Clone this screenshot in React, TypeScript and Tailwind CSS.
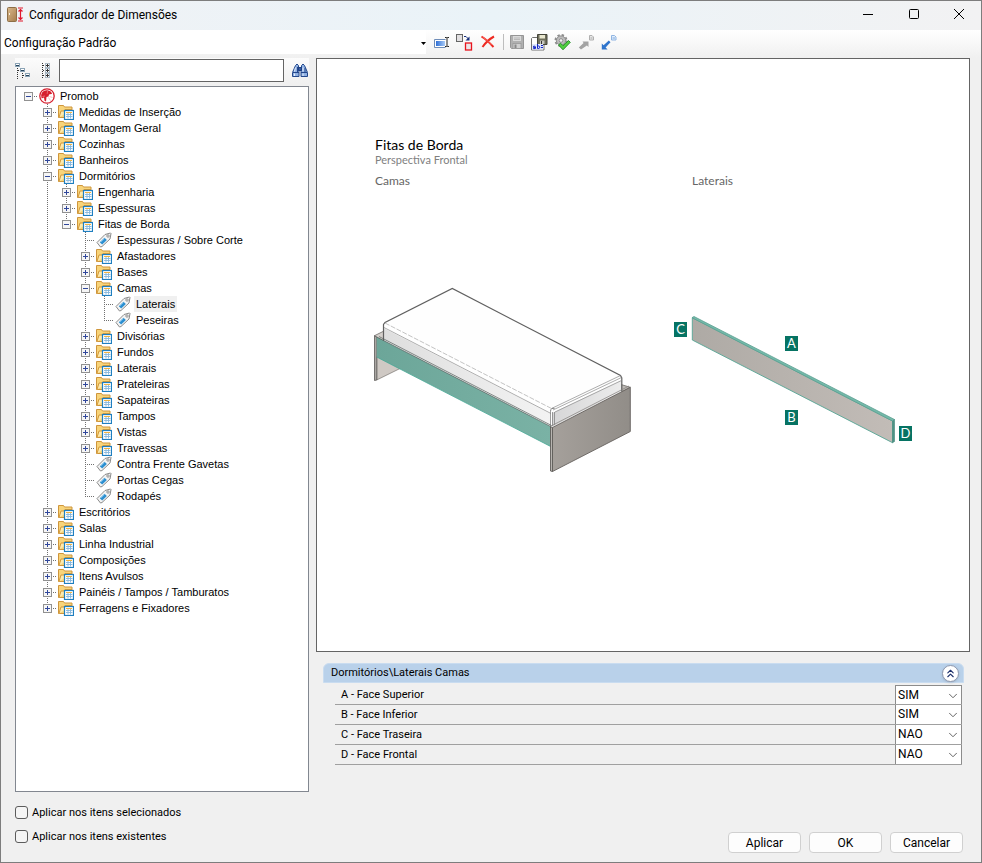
import { useState } from "react";
import { ChevronDown, ChevronsUp } from "lucide-react";

type TreeItem = {
  label: string;
  kind?: "root" | "folder" | "tag";
  open?: boolean;
  children?: TreeItem[];
};

const folder = (label: string): TreeItem => ({ label, kind: "folder" });
const tag = (label: string): TreeItem => ({ label, kind: "tag" });

const tree: TreeItem = {
  label: "Promob",
  kind: "root",
  open: true,
  children: [
    folder("Medidas de Inserção"),
    folder("Montagem Geral"),
    folder("Cozinhas"),
    folder("Banheiros"),
    {
      label: "Dormitórios",
      kind: "folder",
      open: true,
      children: [
        folder("Engenharia"),
        folder("Espessuras"),
        {
          label: "Fitas de Borda",
          kind: "folder",
          open: true,
          children: [
            tag("Espessuras / Sobre Corte"),
            folder("Afastadores"),
            folder("Bases"),
            {
              label: "Camas",
              kind: "folder",
              open: true,
              children: [tag("Laterais"), tag("Peseiras")],
            },
            folder("Divisórias"),
            folder("Fundos"),
            folder("Laterais"),
            folder("Prateleiras"),
            folder("Sapateiras"),
            folder("Tampos"),
            folder("Vistas"),
            folder("Travessas"),
            tag("Contra Frente Gavetas"),
            tag("Portas Cegas"),
            tag("Rodapés"),
          ],
        },
      ],
    },
    folder("Escritórios"),
    folder("Salas"),
    folder("Linha Industrial"),
    folder("Composições"),
    folder("Itens Avulsos"),
    folder("Painéis / Tampos / Tamburatos"),
    folder("Ferragens e Fixadores"),
  ],
};

const faces = [
  { id: "face-a", label: "A - Face Superior", value: "SIM" },
  { id: "face-b", label: "B - Face Inferior", value: "SIM" },
  { id: "face-c", label: "C - Face Traseira", value: "NAO" },
  { id: "face-d", label: "D - Face Frontal", value: "NAO" },
];

/* Icons */

function AppIcon() {
  return (
    <svg width="18" height="16" viewBox="0 0 18 16" aria-hidden="true">
      <defs>
        <linearGradient id="door" x1="0" y1="0" x2="1" y2="1">
          <stop offset="0" stopColor="#d9b98c" />
          <stop offset="1" stopColor="#a67c4a" />
        </linearGradient>
      </defs>
      <rect x=".5" y=".5" width="9" height="14" rx="1" fill="url(#door)" stroke="#8d6e46" />
      <rect x="2" y="6" width="1" height="2" fill="#f7ecd8" />
      <path d="M11 1h5M11 14h5" stroke="#e0182d" strokeWidth="1.200" />
      <path d="M13.500 2v11M11.500 4.500l2-2 2 2M11.500 10.500l2 2 2-2" stroke="#e0182d" strokeWidth="1.200" fill="none" />
    </svg>
  );
}

function CollapseIcon() {
  return (
    <svg width="16" height="16" viewBox="0 0 16 16" shapeRendering="crispEdges" aria-hidden="true">
      <g fill="#fff" stroke="#8ba3b5">
        <rect x="0.500" y="0.500" width="4" height="3" />
        <rect x="5.500" y="5.500" width="4" height="3" />
        <rect x="10.500" y="10.500" width="4" height="3" />
      </g>
      <path d="M1 2.500h3M6 7.500h3M11 12.500h3" stroke="#27465e" />
      <path d="M2.500 5v11M7.500 10v6M3 7.500h2M8 12.500h2" stroke="#333" strokeDasharray="1 1" />
    </svg>
  );
}

function ExpandIcon() {
  return (
    <svg width="16" height="16" viewBox="0 0 16 16" shapeRendering="crispEdges" aria-hidden="true">
      <path d="M5.500 0v16M6 2.500h3M6 7.500h3M6 12.500h3" stroke="#333" strokeDasharray="1 1" />
      <g fill="#fff" stroke="#a9b7c2">
        <rect x="8.500" y="0.500" width="4" height="4" />
        <rect x="8.500" y="5.500" width="4" height="4" />
        <rect x="8.500" y="10.500" width="4" height="4" />
      </g>
      <path d="M9 2.500h3M9 7.500h3M9 12.500h3M10.500 1v3M10.500 6v3M10.500 11v3" stroke="#333" />
    </svg>
  );
}

function BinocularsIcon() {
  return (
    <svg width="16" height="16" viewBox="0 0 16 16" aria-hidden="true">
      <path d="M3.500 2.500L5 1l1.500 1.500V6l.5 2.500v5H.5v-4z" fill="#8fb0e2" stroke="#24488c" />
      <path d="M12.500 2.500L11 1 9.500 2.500V6L9 8.500v5h6.500v-4z" fill="#8fb0e2" stroke="#24488c" />
      <path d="M6.500 4.500h3v3h-3z" fill="#34599e" stroke="#1c3f83" />
      <path d="M1 9.500h6M9 9.500h6M5.500 4v5M13 5v4" stroke="#23468b" />
      <path d="M3.500 4.500l-1 4M11 4.500v4M2.500 10.500v2.500M11 10.500v2.500" stroke="#e6effc" />
    </svg>
  );
}

function PromobIcon() {
  return (
    <svg width="16" height="16" viewBox="0 0 16 16" aria-hidden="true">
      <circle cx="8" cy="8" r="7.200" fill="#fff" stroke="#d6202f" strokeWidth="1.300" />
      <path d="M8.500 2.200A5.800 5.800 0 0 0 2.600 10.500l2.400-1 .5 3.200 1.500.8.500-4.500 2-.5.500-2 3.200-.7a5.800 5.800 0 0 0-4.700-3.600z" fill="#d6202f" />
      <path d="M8.500 2.800l-.3 3M3.500 8.500l2.500-.5" stroke="#f2a4a9" strokeWidth=".6" />
      <path d="M9.500 9.500l2 3.200M10.500 8.500l3 1" stroke="#f0b4b8" strokeWidth=".8" />
    </svg>
  );
}

function FolderIcon() {
  return (
    <svg width="16" height="16" viewBox="0 0 16 16" aria-hidden="true">
      <path d="M.5 13.500v-12h5l1 1.500h7.500v10.500z" fill="#f8d47a" stroke="#cf963c" />
      <path d="M1 13.500l2-6.500h3l1-1.500h7" fill="#fdeaae" stroke="#d39a3c" />
      <rect x="6.500" y="6.500" width="9" height="9" fill="#fff" stroke="#1f7fc0" strokeWidth="1.200" />
      <path d="M8 8.500h6" stroke="#f0b440" />
      <path d="M10 9v5.500M12.500 9v5.500M8 10.500h6.500M8 12.500h6.500" stroke="#86b7dd" strokeWidth=".9" />
    </svg>
  );
}

function TagIcon() {
  return (
    <svg width="16" height="16" viewBox="0 0 16 16" aria-hidden="true">
      <path d="M1 10.500L9 2.500l5.500-1.500.5.500-1 5.500L6 14.500l-1.500.500z" fill="#f4f4f4" stroke="#8a8a8a" />
      <circle cx="12" cy="4" r="1.200" fill="#fff" stroke="#777" strokeWidth=".8" />
      <path d="M3.800 10.300l4.700-4.600 2.400 2.200-4.700 4.700z" fill="#2c8fd0" />
      <path d="M5 10l3.500-3.500" stroke="#7cc2ee" strokeWidth=".8" />
    </svg>
  );
}

function RenameIcon() {
  return (
    <svg width="16" height="16" viewBox="0 0 16 16" aria-hidden="true">
      <defs>
        <linearGradient id="field">
          <stop offset="0" stopColor="#2f6fd6" />
          <stop offset="1" stopColor="#a9cbf7" />
        </linearGradient>
      </defs>
      <path d="M11.500 5.500H.5v8h11" fill="#fff" stroke="#6f8db8" />
      <rect x="2" y="7" width="9" height="5" fill="url(#field)" />
      <path d="M11 3.500h1.500l.5.500.5-.5h1.500M13 4v8M11 12.500h1.500l.5-.5.500.5h1.500" stroke="#222" fill="none" />
    </svg>
  );
}

function DuplicateIcon() {
  return (
    <svg width="17" height="17" viewBox="0 0 17 17" aria-hidden="true">
      <rect x=".5" y=".5" width="6" height="7" fill="#e2e0e2" stroke="#666" />
      <path d="M8 2.500h2l2.500 2.500" stroke="#17307c" fill="none" />
      <path d="M13.500 2.500v4h-4z" fill="#17307c" />
      <rect x="9.500" y="9" width="6" height="7" fill="#ece6e8" stroke="#e8131c" strokeWidth="1.300" />
    </svg>
  );
}

function DeleteIcon() {
  return (
    <svg width="16" height="16" viewBox="0 0 16 16" aria-hidden="true">
      <path d="M1.500 2.500q5 3 12 10.500M14 2.500Q7.500 6 2.500 13" stroke="#ee2a22" strokeWidth="2" fill="none" />
      <path d="M2.500 3q5 3 9 8" stroke="#ff8a80" strokeWidth=".6" fill="none" />
    </svg>
  );
}

function SaveIcon() {
  return (
    <svg width="16" height="16" viewBox="0 0 16 16" aria-hidden="true">
      <path d="M1.500 1.500h13v13h-12l-1-1z" fill="#b0b0b0" stroke="#959595" />
      <rect x="4" y="2" width="8" height="5" fill="#dadada" />
      <path d="M5 4h6M5 5.500h6" stroke="#b0b0b0" strokeWidth=".8" />
      <rect x="4" y="9.500" width="8" height="5" fill="#cfcfcf" stroke="#989898" strokeWidth=".8" />
      <rect x="5.500" y="10.500" width="2" height="3.500" fill="#888" />
    </svg>
  );
}

function SaveAsIcon() {
  return (
    <svg width="17" height="17" viewBox="0 0 17 17" aria-hidden="true">
      <path d="M.5 4.500l1-1h11.500v12.500H.5z" fill="#fff" stroke="#707070" />
      <path d="M6.500.5h9.500v10H6.500z" fill="#6f6f5c" stroke="#45453a" />
      <rect x="8.500" y="1" width="5.500" height="3.500" fill="#e9e7cf" />
      <rect x="9" y="6.500" width="4.500" height="3.500" fill="#c8c8c0" />
      <path d="M10.500 7v3" stroke="#333" />
      <rect x="1" y="10" width="11" height="5.500" fill="#dfe7fb" />
      <path d="M2 12.500q2.500-1 2.500.5v1.500q-2.500.5-2.500-.5t2.500-.5M6.500 10v4.500h1.300q1-.2 1-1.300T7.800 12H6.500M10 11.500h2M10 13.500h2" stroke="#1626c8" fill="none" />
    </svg>
  );
}

function ApplyIcon() {
  return (
    <svg width="17" height="17" viewBox="0 0 17 17" aria-hidden="true">
      <circle cx="7" cy="6.500" r="5.600" fill="none" stroke="#8d8d8d" strokeWidth="1.800" strokeDasharray="2.400 2" />
      <circle cx="7" cy="6.500" r="4.600" fill="#bdbdbd" stroke="#8a8a8a" />
      <circle cx="7" cy="6.500" r="1.800" fill="#f2f2f2" stroke="#808080" strokeWidth=".8" />
      <path d="M4.500 11l2-1.800 2.500 2.500 5.500-5.200 1.800 1.800L9 15.800z" fill="#51cf3f" stroke="#1d8a20" strokeWidth=".9" />
    </svg>
  );
}

function ExportIcon() {
  return (
    <svg width="16" height="16" viewBox="0 0 16 16" aria-hidden="true">
      <path d="M.8 13.500l4.800-4.500L4.500 7.500h6v5.500L8.900 11.500 3 15.500z" fill="#a3a3a3" />
      <path d="M11.500 1.500h2.500l1.500 1.500v3h-4z" fill="#e8e8e8" stroke="#b0b0b0" />
      <path d="M12.500 4h2" stroke="#aaa" />
    </svg>
  );
}

function ImportIcon() {
  return (
    <svg width="16" height="16" viewBox="0 0 16 16" aria-hidden="true">
      <path d="M.8 15.500V9.500l1.800 1.800 5.200-4.800 1.700 1.700-4.900 5.200 2 2.100z" fill="#2f74cc" />
      <path d="M10.500 1.500h3l1.500 1.500v3h-4.500z" fill="#e3effc" stroke="#8fb4e2" />
      <path d="M11.500 4h2.500" stroke="#7fa9de" />
    </svg>
  );
}

/* Tree */

function Guide({ dashed }: { dashed: boolean }) {
  return (
    <svg width="19" height="16" viewBox="0 0 19 16" shapeRendering="crispEdges" className="shrink-0" aria-hidden="true">
      {dashed && <path d="M9.500 0v16" stroke="#707070" strokeDasharray="1 1" />}
    </svg>
  );
}

function Branch({ item, open, root, last }: { item: TreeItem; open: boolean; root: boolean; last: boolean }) {
  return (
    <svg width="19" height="16" viewBox="0 0 19 16" shapeRendering="crispEdges" aria-hidden="true">
      {!root && <path d={last ? "M9.500 0v9" : "M9.500 0v16"} stroke="#707070" strokeDasharray="1 1" />}
      <path d="M9 8.500h10" stroke="#707070" strokeDasharray="1 1" />
      {item.kind !== "tag" && (
        <>
          <rect x="5.500" y="4.500" width="8" height="8" fill="#f6f6f6" stroke="#919191" />
          <path d={open ? "M7 8.500h5" : "M7 8.500h5M9.500 6v5"} stroke="#30479b" />
        </>
      )}
    </svg>
  );
}

type NodeProps = {
  item: TreeItem;
  guides: boolean[];
  last: boolean;
  path: string;
  selected: string;
  onSelect: (path: string) => void;
};

function TreeNode({ item, guides, last, path, selected, onSelect }: NodeProps) {
  const [open, setOpen] = useState(!!item.open);
  const root = item.kind === "root";
  const children = item.children ?? [];

  return (
    <li role="treeitem" aria-expanded={item.kind === "tag" ? undefined : open} aria-selected={selected === path}>
      <div className="flex h-4 items-center">
        {guides.map((dashed, i) => (
          <Guide key={i} dashed={dashed} />
        ))}
        {item.kind === "tag" ? (
          <Branch item={item} open={open} root={root} last={last} />
        ) : (
          <button type="button" aria-label={open ? "Recolher" : "Expandir"} onClick={() => setOpen(!open)}>
            <Branch item={item} open={open} root={root} last={last} />
          </button>
        )}
        <button type="button" onClick={() => onSelect(path)} className="flex h-4 items-center gap-[3px] pl-px whitespace-nowrap">
          {root && <PromobIcon />}
          {item.kind === "folder" && <FolderIcon />}
          {item.kind === "tag" && <TagIcon />}
          <span className={selected === path ? "bg-[#f0f0f0] px-0.5 leading-4" : "px-0.5 leading-4"}>{item.label}</span>
        </button>
      </div>
      {open && children.length > 0 && (
        <ul role="group">
          {children.map((child, i) => (
            <TreeNode
              key={child.label}
              item={child}
              guides={[...guides, !last]}
              last={i === children.length - 1}
              path={`${path}/${child.label}`}
              selected={selected}
              onSelect={onSelect}
            />
          ))}
        </ul>
      )}
    </li>
  );
}

/* Preview drawings */

function BedDrawing() {
  return (
    <svg width="261" height="192" viewBox="375 284 261 192" className="overflow-visible" role="img" aria-label="Camas">
      <defs>
        <linearGradient id="foot">
          <stop offset="0" stopColor="#a5a09b" />
          <stop offset="1" stopColor="#918d88" />
        </linearGradient>
        <linearGradient id="rail">
          <stop offset="0" stopColor="#6ca699" />
          <stop offset="1" stopColor="#7ab2a5" />
        </linearGradient>
        <linearGradient id="side">
          <stop offset="0" stopColor="#dedede" />
          <stop offset="1" stopColor="#f3f3f3" />
        </linearGradient>
        <linearGradient id="end">
          <stop offset="0" stopColor="#d6d6d7" />
          <stop offset="1" stopColor="#ececec" />
        </linearGradient>
      </defs>
      <path d="M374.500 335.700L384 331v10l-7.300-3.500z" fill="#d5d0cc" stroke="#6b6865" strokeWidth=".8" />
      <path d="M376.700 356L400 368.500 376.700 380z" fill="#cfc9c4" stroke="#77736f" strokeWidth=".7" />
      <path d="M374.500 335.700l2.300 1.300v43l-2.300.5z" fill="#aaa6a2" stroke="#5b5856" strokeWidth=".8" />
      <path d="M621 384.500l9.300 2.800-9 5z" fill="#bdb9b5" stroke="#6b6865" strokeWidth=".8" />
      <path d="M383.500 328v12.500L551 427v-13z" fill="url(#side)" />
      <path d="M552 411l69.500-33v13.500L552 427z" fill="url(#end)" />
      <path d="M452.300 288.500L385 322.500l-1.500 5L551 413.500l70.500-33.500v-2L620.500 375.500z" fill="#fefefe" />
      <path d="M383.500 341v-16.500l1.500-2 67.300-34 168.200 87 1.300 2.500v13" fill="none" stroke="#606060" strokeWidth="1.200" />
      <path d="M385 323L551.500 408.500" fill="none" stroke="#9a9a9a" strokeWidth=".6" strokeDasharray="5 1.500" />
      <path d="M384 327.500L551 413.500" fill="none" stroke="#8a8a8a" strokeWidth=".7" />
      <path d="M551.500 408.500l69-33M553 410l68.500-32.500M555 412l66.500-31.500" fill="none" stroke="#8a8a8a" strokeWidth=".7" />
      <path d="M550.500 411v15M552.500 412v14M554.500 412V425" stroke="#777" strokeWidth=".7" />
      <path d="M550.500 411q.5-3.500 4-2.500" fill="none" stroke="#666" strokeWidth=".8" />
      <path d="M376.700 337L551 426.700v20L376.700 357z" fill="url(#rail)" />
      <path d="M376.700 357L551 446.700" stroke="#49a997" strokeWidth=".8" />
      <path d="M376.700 337L551 426.700M379 336.500L551.500 425.500" stroke="#555f5c" strokeWidth=".7" fill="none" />
      <path d="M552.500 427.500l77.800-40.200v44.200l-77.800 40z" fill="url(#foot)" stroke="#65615e" strokeWidth=".9" />
      <path d="M550.500 426.700l2 .8v44l-2-.5z" fill="#b7b4b0" stroke="#5f5c59" strokeWidth=".9" />
      <path d="M551 426l78-40" stroke="#8a8784" strokeWidth=".8" />
    </svg>
  );
}

function Marker({ x, y, letter }: { x: number; y: number; letter: string }) {
  return (
    <g>
      <rect x={x} y={y} width="13" height="15" fill="#067363" />
      <text x={x + 6.5} y={y + 12} textAnchor="middle" fontSize="13" fill="#fff" className="font-['Lato',sans-serif]">
        {letter}
      </text>
    </g>
  );
}

function RailDrawing() {
  return (
    <svg width="241" height="192" viewBox="675 284 241 192" className="overflow-visible" role="img" aria-label="Laterais">
      <defs>
        <linearGradient id="board">
          <stop offset="0" stopColor="#aeaaa5" />
          <stop offset="1" stopColor="#c2bcb7" />
        </linearGradient>
      </defs>
      <path d="M692.300 317.700L892.500 421v21.700L692.300 340z" fill="url(#board)" stroke="#55a594" strokeWidth=".9" />
      <path d="M692 317.700l2-1.200 200.500 103-2 1.500z" fill="#75b9aa" stroke="#5b9f91" strokeWidth=".8" />
      <path d="M892.500 421l2-1.500v22l-2 1.200z" fill="#4f9184" stroke="#4f9184" strokeWidth=".7" />
      <Marker x={674} y={322} letter="C" />
      <Marker x={785} y={336} letter="A" />
      <Marker x={785} y={410} letter="B" />
      <Marker x={899} y={426} letter="D" />
    </svg>
  );
}

const toolGroups = [
  [
    { label: "Renomear", icon: <RenameIcon /> },
    { label: "Duplicar", icon: <DuplicateIcon /> },
    { label: "Excluir", icon: <DeleteIcon /> },
  ],
  [
    { label: "Salvar", icon: <SaveIcon /> },
    { label: "Salvar como", icon: <SaveAsIcon /> },
    { label: "Aplicar configuração", icon: <ApplyIcon /> },
    { label: "Exportar", icon: <ExportIcon /> },
    { label: "Importar", icon: <ImportIcon /> },
  ],
];

export default function App() {
  const [selected, setSelected] = useState("Promob/Dormitórios/Fitas de Borda/Camas/Laterais");

  return (
    <div className="flex h-screen flex-col overflow-hidden border border-[#7d7d7d] bg-[#f0f0f0] font-['Roboto',sans-serif] text-[11px] text-black">
      {/* Title bar */}
      <header className="flex h-[29px] shrink-0 items-center bg-linear-to-r from-[#f0f2f5] via-[#eaf3f8] to-[#f2f2f3] pb-px pl-1.5">
        <AppIcon />
        <h1 className="ml-1 flex-1 text-[12px]">Configurador de Dimensões</h1>
        <button type="button" aria-label="Minimizar" className="flex h-full w-[46px] items-center justify-center">
          <svg width="12" height="12" viewBox="0 0 12 12" aria-hidden="true">
            <path d="M1 5.500h10" stroke="#000" />
          </svg>
        </button>
        <button type="button" aria-label="Maximizar" className="flex h-full w-[46px] items-center justify-center">
          <svg width="12" height="12" viewBox="0 0 12 12" aria-hidden="true">
            <rect x="1.500" y=".5" width="9" height="9" rx="1" fill="none" stroke="#000" />
          </svg>
        </button>
        <button type="button" aria-label="Fechar" className="flex h-full w-11 items-center justify-center">
          <svg width="12" height="12" viewBox="0 0 12 12" aria-hidden="true">
            <path d="M1 0l10 10M11 0L1 10" stroke="#000" />
          </svg>
        </button>
      </header>

      {/* Configuration toolbar */}
      <div className="flex h-7 shrink-0 bg-linear-to-b from-white to-[#f0f0f0]">
        <button type="button" className="flex h-6 w-[425px] items-center justify-between bg-white pt-0.5 pl-[3px] text-[12px]">
          Configuração Padrão
          <svg width="5" height="3" viewBox="0 0 5 3" aria-hidden="true">
            <path d="M0 0h5L2.500 3z" />
          </svg>
        </button>
        <div className="flex h-6 items-center">
          {toolGroups.map((group, i) => (
            <div key={i} className={i > 0 ? "ml-1 flex border-l border-[#bdbdbd] pl-px" : "flex pl-1"}>
              {group.map((tool) => (
                <button key={tool.label} type="button" aria-label={tool.label} className="flex h-4 w-[23px] items-center justify-center">
                  {tool.icon}
                </button>
              ))}
            </div>
          ))}
        </div>
      </div>

      <main className="flex min-h-0 flex-1 gap-[7px] pr-[11px] pl-3.5">
        {/* Left column */}
        <section className="flex w-[294px] shrink-0 flex-col">
          <div className="mb-[3px] flex h-[25px] items-center bg-linear-to-b from-[#fcfcfc] to-[#f0f0f0]">
            <button type="button" aria-label="Recolher tudo">
              <CollapseIcon />
            </button>
            <button type="button" aria-label="Expandir tudo" className="mx-1.5">
              <ExpandIcon />
            </button>
            <input type="text" aria-label="Pesquisar" className="h-[23px] min-w-0 flex-1 border border-[#646464] bg-white px-1 outline-none" />
            <button type="button" aria-label="Localizar" className="pr-px pl-2">
              <BinocularsIcon />
            </button>
          </div>
          <div className="min-h-0 flex-1 overflow-auto border border-[#828790] bg-white pt-px pl-[3px] font-['Liberation_Sans',sans-serif]">
            <ul role="tree">
              <TreeNode item={tree} guides={[]} last path="Promob" selected={selected} onSelect={setSelected} />
            </ul>
          </div>
          <div className="flex h-[70px] flex-col gap-2 pt-3">
            <label className="flex h-4 items-center gap-1">
              <input type="checkbox" className="size-[13px] appearance-none rounded-[3px] border border-[#5c5c5c] bg-[#f5f5f5] checked:bg-[#0067c0]" />
              <span className="pt-0.5">Aplicar nos itens selecionados</span>
            </label>
            <label className="flex h-4 items-center gap-1">
              <input type="checkbox" className="size-[13px] appearance-none rounded-[3px] border border-[#5c5c5c] bg-[#f5f5f5] checked:bg-[#0067c0]" />
              <span className="pt-0.5">Aplicar nos itens existentes</span>
            </label>
          </div>
        </section>

        {/* Right column */}
        <section className="flex min-w-0 flex-1 flex-col">
          <div className="min-h-0 flex-1 overflow-hidden border border-[#646464] bg-white pt-[78px] pl-[58px] font-['Lato',sans-serif]">
            <h2 className="text-[14px] leading-4">Fitas de Borda</h2>
            <p className="text-[11px] leading-3.5 text-[#808080]">Perspectiva Frontal</p>
            <div className="mt-1.5 flex">
              <figure className="w-[300px] shrink-0">
                <figcaption className="text-[12px] leading-4 text-[#666]">Camas</figcaption>
                <div className="pt-[95px]">
                  <BedDrawing />
                </div>
              </figure>
              <figure className="shrink-0">
                <figcaption className="pl-[17px] text-[12px] leading-4 text-[#666]">Laterais</figcaption>
                <div className="pt-[95px]">
                  <RailDrawing />
                </div>
              </figure>
            </div>
          </div>

          {/* Face options */}
          <div className="mt-[11px] mr-1.5 ml-[7px]">
            <div className="flex h-5 items-center justify-between rounded-t-md border border-[#c9dcf0] bg-[#b9d1ea] pr-1 pl-[7px]">
              <h3>Dormitórios\Laterais Camas</h3>
              <button type="button" aria-label="Recolher grupo" className="flex size-[17px] items-center justify-center rounded-full border border-[#8e98ae] bg-white shadow-sm">
                <ChevronsUp size={13} strokeWidth={2} color="#1c2f6b" />
              </button>
            </div>
            <div className="mt-0.5 mr-0.5 ml-3">
              {faces.map((face, i) => (
                <div key={face.id} className="flex h-5 border-b border-[#a0a0a0]">
                  <label htmlFor={face.id} className="flex flex-1 items-center pt-0.5 pl-1.5">
                    {face.label}
                  </label>
                  <div className={i === 0 ? "relative w-[67px] border-x border-t border-[#8c8c8c] bg-white" : "relative w-[67px] border-x border-[#8c8c8c] bg-white"}>
                    <select id={face.id} defaultValue={face.value} className="block h-full w-full appearance-none pb-px pl-0.5 text-[12px] outline-none">
                      <option>SIM</option>
                      <option>NAO</option>
                    </select>
                    <ChevronDown size={14} strokeWidth={1.5} className="pointer-events-none absolute top-[3px] right-px text-[#505050]" />
                  </div>
                </div>
              ))}
            </div>
          </div>

          {/* Dialog buttons */}
          <div className="mt-[67px] mr-[7px] mb-[9px] flex justify-end gap-2">
            <button type="button" className="h-[21px] w-[73px] rounded border border-[#d0d0d0] bg-[#fdfdfd] text-[12px]">
              Aplicar
            </button>
            <button type="button" className="h-[21px] w-[73px] rounded border border-[#d0d0d0] bg-[#fdfdfd] text-[12px]">
              OK
            </button>
            <button type="button" className="h-[21px] w-[73px] rounded border border-[#d0d0d0] bg-[#fdfdfd] text-[12px]">
              Cancelar
            </button>
          </div>
        </section>
      </main>
    </div>
  );
}
